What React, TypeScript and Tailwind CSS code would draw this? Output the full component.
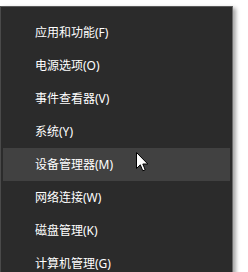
import React from 'react';

const items = [
  '应用和功能(F)',
  '电源选项(O)',
  '事件查看器(V)',
  '系统(Y)',
  '设备管理器(M)',
  '网络连接(W)',
  '磁盘管理(K)',
  '计算机管理(G)',
];

export default function App() {
  const active = 4;

  return (
    <div className="relative w-[248px] h-[272px] overflow-hidden bg-white pt-[6px] font-['Noto_Sans','Noto_Sans_CJK_SC',sans-serif]">
      <div className="w-[233px] bg-[#2b2b2b] border border-r-[#6a6a6a] border-t-[#5a5a5a] border-l-[#4a4a4a] border-b-0 px-[2px] pt-[9px] pb-[10px] shadow-[3px_2px_4px_rgba(0,0,0,0.35)]">
        {items.map((label, i) => (
          <div
            key={label}
            className={cn(
              'flex items-center h-[33px] pl-[32px] text-[12px] text-white',
              i === active && 'bg-[#414141]'
            )}
          >
            {label}
          </div>
        ))}
      </div>

      {/* mouse pointer */}
      <svg className="absolute left-[136px] top-[152px]" width="13" height="21" viewBox="0 0 13 21">
        <path
          d="M0.5 0.5 L0.5 16.5 L4.3 12.8 L6.8 18.8 L9.2 17.8 L6.8 12 L11.8 12 Z"
          fill="#fff"
          stroke="#000"
          strokeWidth="1"
          strokeLinejoin="miter"
        />
      </svg>
    </div>
  );
}

function cn(...inputs: any[]) {
  return inputs.filter(Boolean).join(' ');
}
